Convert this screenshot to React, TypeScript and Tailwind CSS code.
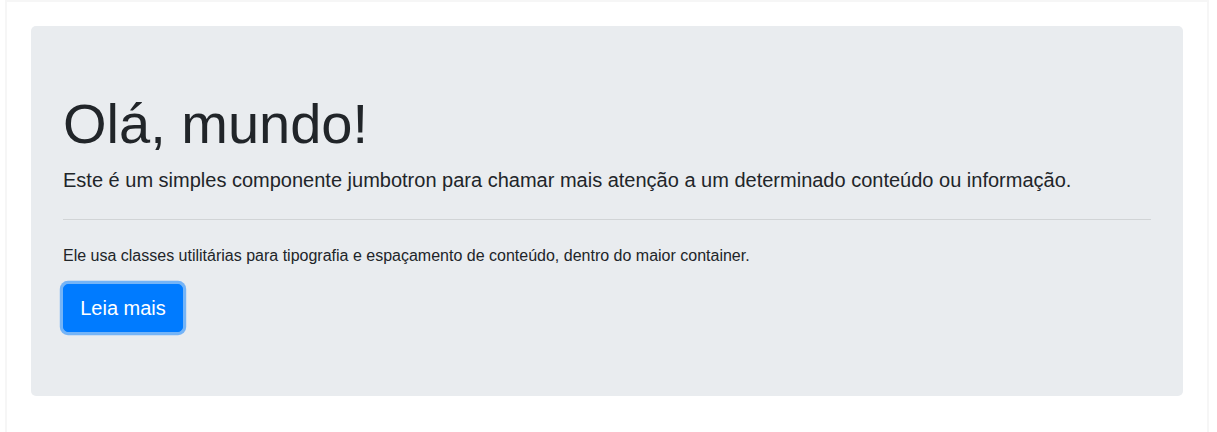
export default function App() {
  return (
    <div className="w-[1217px] h-[432px] bg-white overflow-hidden" style={{ fontFamily: '"Liberation Sans", Arial, sans-serif' }}>
      <div className="ml-[5px] w-[1204px] h-[440px] border-2 border-[#f6f6f6] px-[24px] pt-[24px]">
        <div className="bg-[#e9ecef] rounded-[5px] px-[32px] py-[64px] text-[#212529]">
          <h1 className="text-[56px] leading-[1.2] font-light mb-[8px]">Olá, mundo!</h1>
          <p className="text-[20px] leading-[1.5] font-light">
            Este é um simples componente jumbotron para chamar mais atenção a um determinado conteúdo ou informação.
          </p>
          <hr className="my-[24px] border-0 border-t border-[rgba(0,0,0,0.1)]" />
          <p className="text-[16px] leading-[24px] mb-[16px]">
            Ele usa classes utilitárias para tipografia e espaçamento de conteúdo, dentro do maior container.
          </p>
          <button className="w-[120px] bg-[#007bff] text-white text-[20px] leading-[1.5] py-[8px] border border-[#007bff] rounded-[5px] shadow-[0_0_0_3.2px_rgba(0,123,255,0.5)] whitespace-nowrap">
            Leia mais
          </button>
        </div>
      </div>
    </div>
  );
}
